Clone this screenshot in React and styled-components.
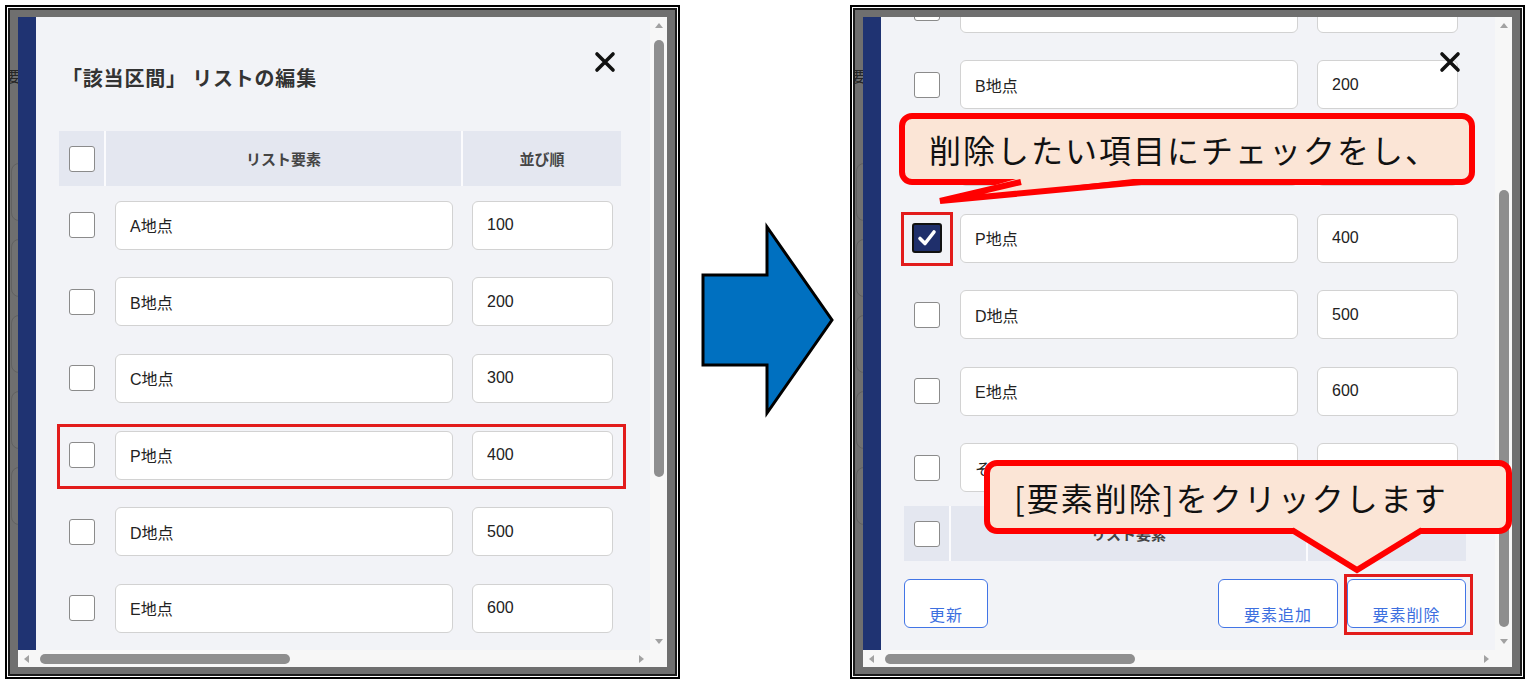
import React from "react";
import styled, { createGlobalStyle } from "styled-components";

const GlobalStyle = createGlobalStyle`
  html, body {
    margin: 0;
    padding: 0;
    background: #fff;
  }
  body {
    font-family: "Noto Sans CJK JP", "Noto Sans", sans-serif;
  }
`;

const rows = [
  { name: "A地点", order: 100 },
  { name: "B地点", order: 200 },
  { name: "C地点", order: 300 },
  { name: "P地点", order: 400 },
  { name: "D地点", order: 500 },
  { name: "E地点", order: 600 },
  { name: "その他", order: 700 },
];

const Page = styled.div`
  display: flex;
  align-items: flex-start;
  width: 1532px;
  height: 684px;
  padding: 5px 0 0 5px;
  box-sizing: border-box;
  overflow: hidden;
`;

/* screenshot frame: black rule, white gap, dark rule */
const Frame = styled.div`
  position: relative;
  flex: none;
  width: 675px;
  height: 674px;
  box-sizing: border-box;
  border: 2px solid #000;
  padding: 1px;
  background: #fff;
`;

const Screen = styled.div`
  height: 100%;
  box-sizing: border-box;
  border: 2px solid #1b1b1b;
  background: #6f6f6f;
  display: grid;
  grid-template-columns: 8px 632px 17px 1fr;
  grid-template-rows: 7px 633px 17px 1fr;
`;

const DimStrip = styled.div`
  grid-column: 1;
  grid-row: 2 / 4;
  overflow: hidden;
  display: flex;
  flex-direction: column;
`;

const DimGlyph = styled.span`
  margin: 51px 0 0 -4px;
  font-size: 15px;
  line-height: 15px;
  color: #262626;
`;

const GhostBox = styled.div`
  flex: none;
  width: 20px;
  height: 56px;
  margin: ${(p) => p.$gap}px 0 0 1px;
  border: 1px solid #616161;
  border-radius: 8px;
  background: #717171;
`;

const Viewport = styled.div`
  grid-column: 2;
  grid-row: 2;
  position: relative;
  overflow: hidden;
  background: #f2f3f7;
  border-left: 18px solid #1f3372;
`;

const Sheet = styled.div`
  margin-top: ${(p) => -p.$scroll}px;
  padding: 47px 0 22px 23px;
`;

const Title = styled.h2`
  margin: 0 0 39px 3px;
  font-size: 20px;
  line-height: 28px;
  font-weight: 700;
  letter-spacing: 0.8px;
  color: #333;
`;

const HeadRow = styled.div`
  display: grid;
  grid-template-columns: 45px 355px 158px;
  column-gap: 2px;
  width: 562px;
  height: 55px;
  background: #fbfbfd;
  margin-bottom: ${(p) => (p.$top ? 1 : 0)}px;
`;

const HeadCell = styled.div`
  display: flex;
  align-items: center;
  justify-content: center;
  background: #e4e7f0;
  font-size: 15px;
  font-weight: 700;
  color: #454545;
`;

const Row = styled.div`
  display: grid;
  grid-template-columns: 45px 355px 158px;
  column-gap: 2px;
  width: 562px;
  height: 76.6px;
  align-items: center;
`;

const BoxCell = styled.div`
  display: flex;
  justify-content: center;
`;

const FieldCell = styled.div`
  padding: 0 8px 0 9px;
`;

const Field = styled.div`
  height: 49px;
  box-sizing: border-box;
  display: flex;
  align-items: center;
  padding-left: 14px;
  border: 1px solid #d2d2d2;
  border-radius: 6px;
  background: #fff;
  font-family: "Liberation Sans", "Noto Sans CJK JP", sans-serif;
  font-size: 16px;
  color: #222;
`;

const Check = styled.span`
  display: flex;
  align-items: center;
  justify-content: center;
  box-sizing: border-box;
  width: ${(p) => (p.$on ? 30 : 26)}px;
  height: ${(p) => (p.$on ? 30 : 26)}px;
  border: ${(p) => (p.$on ? "2px solid #111" : "1.5px solid #8b8b8b")};
  border-radius: 3px;
  background: ${(p) => (p.$on ? "#1f2f6b" : "#fff")};
`;

const ButtonBar = styled.div`
  display: flex;
  gap: 9px;
  width: 562px;
  margin-top: 18px;
`;

const Button = styled.button`
  width: ${(p) => p.$w}px;
  height: 49px;
  box-sizing: border-box;
  display: flex;
  align-items: flex-end;
  justify-content: center;
  padding: 0 0 3px;
  border: 1.5px solid #4275e6;
  border-radius: 6px;
  background: #fff;
  font-family: "Noto Sans CJK JP", sans-serif;
  font-size: 16px;
  line-height: 20px;
  letter-spacing: 1px;
  color: #3d6fdf;

  &:first-child {
    margin-right: auto;
  }
`;

const CloseButton = styled.button`
  position: absolute;
  top: 34px;
  right: 34px;
  z-index: 2;
  width: 22px;
  height: 22px;
  padding: 0;
  border: 0;
  background: transparent;
`;

const VBar = styled.div`
  grid-column: 3;
  grid-row: 2;
  display: flex;
  flex-direction: column;
  background: #f7f7f7;
`;

const HBar = styled.div`
  grid-column: 2;
  grid-row: 3;
  display: flex;
  background: #f7f7f7;
`;

const Corner = styled.div`
  grid-column: 3;
  grid-row: 3;
  background: #f7f7f7;
`;

const ArrowCell = styled.div`
  flex: none;
  width: 17px;
  height: 17px;
  display: flex;
  align-items: center;
  justify-content: center;
`;

const Tri = styled.span`
  width: 0;
  height: 0;
  border: 4.5px solid transparent;
  ${(p) =>
    ({
      up: "border-bottom: 5px solid #a2a2a2; border-top-width: 0;",
      down: "border-top: 5px solid #a2a2a2; border-bottom-width: 0;",
      left: "border-right: 5px solid #a2a2a2; border-left-width: 0;",
      right: "border-left: 5px solid #a2a2a2; border-right-width: 0;",
    }[p.$dir])}
`;

const VTrack = styled.div`
  flex: 1;
  padding-top: ${(p) => p.$start}px;
`;

const VThumb = styled.div`
  width: 10px;
  height: ${(p) => p.$size}px;
  margin: 0 auto;
  border-radius: 5px;
  background: #8e8e8e;
`;

const HTrack = styled.div`
  flex: 1;
  display: flex;
  align-items: center;
  padding-left: ${(p) => p.$start}px;
`;

const HThumb = styled.div`
  width: ${(p) => p.$size}px;
  height: 10px;
  border-radius: 5px;
  background: #8e8e8e;
`;

const ArrowColumn = styled.svg`
  flex: none;
  display: block;
`;

/* red annotation frame laid over the screenshot */
const Mark = styled.div`
  position: absolute;
  left: ${(p) => p.$x}px;
  top: ${(p) => p.$y}px;
  width: ${(p) => p.$w}px;
  height: ${(p) => p.$h}px;
  box-sizing: border-box;
  border: 3px solid #e21b1b;
  z-index: 4;
`;

const Callout = styled.div`
  position: absolute;
  left: ${(p) => p.$x}px;
  top: ${(p) => p.$y}px;
  width: ${(p) => p.$w}px;
  height: ${(p) => p.$h}px;
  box-sizing: border-box;
  display: flex;
  align-items: center;
  padding-left: 24px;
  border: 6px solid #ff0000;
  border-radius: 13px;
  background: #fbe5d6;
  z-index: 5;
`;

const CalloutText = styled.span`
  position: relative;
  z-index: 1;
  font-family: "Noto Sans CJK JP", sans-serif;
  font-size: 32px;
  line-height: 1;
  letter-spacing: 2px;
  color: #111;
  white-space: nowrap;
`;

const Tail = styled.svg`
  position: absolute;
  left: 0;
  top: 0;
  overflow: visible;
  pointer-events: none;
`;

function CheckMark() {
  return (
    <svg width="22" height="22" viewBox="0 0 22 22">
      <path d="M4 11.5 L9 16.5 L18 5" fill="none" stroke="#fff" strokeWidth="3.6" strokeLinecap="round" strokeLinejoin="round" />
    </svg>
  );
}

function CloseIcon() {
  return (
    <svg width="22" height="22" viewBox="0 0 22 22">
      <path d="M3 3 L19 19 M19 3 L3 19" stroke="#111" strokeWidth="3.6" strokeLinecap="round" />
    </svg>
  );
}

function TableHead({ top }) {
  return (
    <HeadRow $top={top}>
      <HeadCell>
        <Check />
      </HeadCell>
      <HeadCell>リスト要素</HeadCell>
      <HeadCell>並び順</HeadCell>
    </HeadRow>
  );
}

function EditPanel({ scroll, checked, vStart, children }) {
  return (
    <Frame>
      <Screen>
        <DimStrip>
          <DimGlyph>要</DimGlyph>
          <GhostBox $gap={80} />
          <GhostBox $gap={18} />
          <GhostBox $gap={18} />
          <GhostBox $gap={18} />
          <GhostBox $gap={18} />
        </DimStrip>

        <Viewport>
          <CloseButton>
            <CloseIcon />
          </CloseButton>
          <Sheet $scroll={scroll}>
            <Title>「該当区間」 リストの編集</Title>
            <TableHead top />
            {rows.map((r) => (
              <Row key={r.name}>
                <BoxCell>
                  <Check $on={r.name === checked}>{r.name === checked && <CheckMark />}</Check>
                </BoxCell>
                <FieldCell>
                  <Field>{r.name}</Field>
                </FieldCell>
                <FieldCell>
                  <Field>{r.order}</Field>
                </FieldCell>
              </Row>
            ))}
            <TableHead />
            <ButtonBar>
              <Button $w={84}>更新</Button>
              <Button $w={120}>要素追加</Button>
              <Button $w={119}>要素削除</Button>
            </ButtonBar>
          </Sheet>
        </Viewport>

        <VBar>
          <ArrowCell>
            <Tri $dir="up" />
          </ArrowCell>
          <VTrack $start={vStart}>
            <VThumb $size={437} />
          </VTrack>
          <ArrowCell>
            <Tri $dir="down" />
          </ArrowCell>
        </VBar>
        <HBar>
          <ArrowCell>
            <Tri $dir="left" />
          </ArrowCell>
          <HTrack $start={5}>
            <HThumb $size={250} />
          </HTrack>
          <ArrowCell>
            <Tri $dir="right" />
          </ArrowCell>
        </HBar>
        <Corner />
      </Screen>
      {children}
    </Frame>
  );
}

export default function App() {
  return (
    <>
      <GlobalStyle />
      <Page>
        <EditPanel scroll={0} vStart={6}>
          <Mark $x={50} $y={417} $w={569} $h={65} />
        </EditPanel>

        <ArrowColumn width="170" height="674" viewBox="0 0 170 674">
          <polygon
            points="23,270 87,270 87,222 152,315 87,408 87,360 23,360"
            fill="#0070c0"
            stroke="#000"
            strokeWidth="3"
            strokeLinejoin="miter"
          />
        </ArrowColumn>

        <EditPanel scroll={217} checked="P地点" vStart={156}>
          <Mark $x={49} $y={205} $w={52} $h={54} />
          <Mark $x={492} $y={567} $w={129} $h={61} />

          <Callout $x={47} $y={106} $w={576} $h={72}>
            <Tail width="576" height="100">
              <polygon points="115,59 237,59 35,82" fill="#fbe5d6" />
              <polyline points="116,63 35,82 236,63" fill="none" stroke="#ff0000" strokeWidth="6" strokeLinejoin="miter" />
            </Tail>
            <CalloutText>削除したい項目にチェックをし、</CalloutText>
          </Callout>

          <Callout $x={132} $y={453} $w={528} $h={74}>
            <Tail width="528" height="120">
              <polygon points="300,60 434,60 367,104" fill="#fbe5d6" />
              <polyline points="302,64 367,104 432,64" fill="none" stroke="#ff0000" strokeWidth="6" strokeLinejoin="miter" />
            </Tail>
            <CalloutText>[要素削除]をクリックします</CalloutText>
          </Callout>
        </EditPanel>
      </Page>
    </>
  );
}
